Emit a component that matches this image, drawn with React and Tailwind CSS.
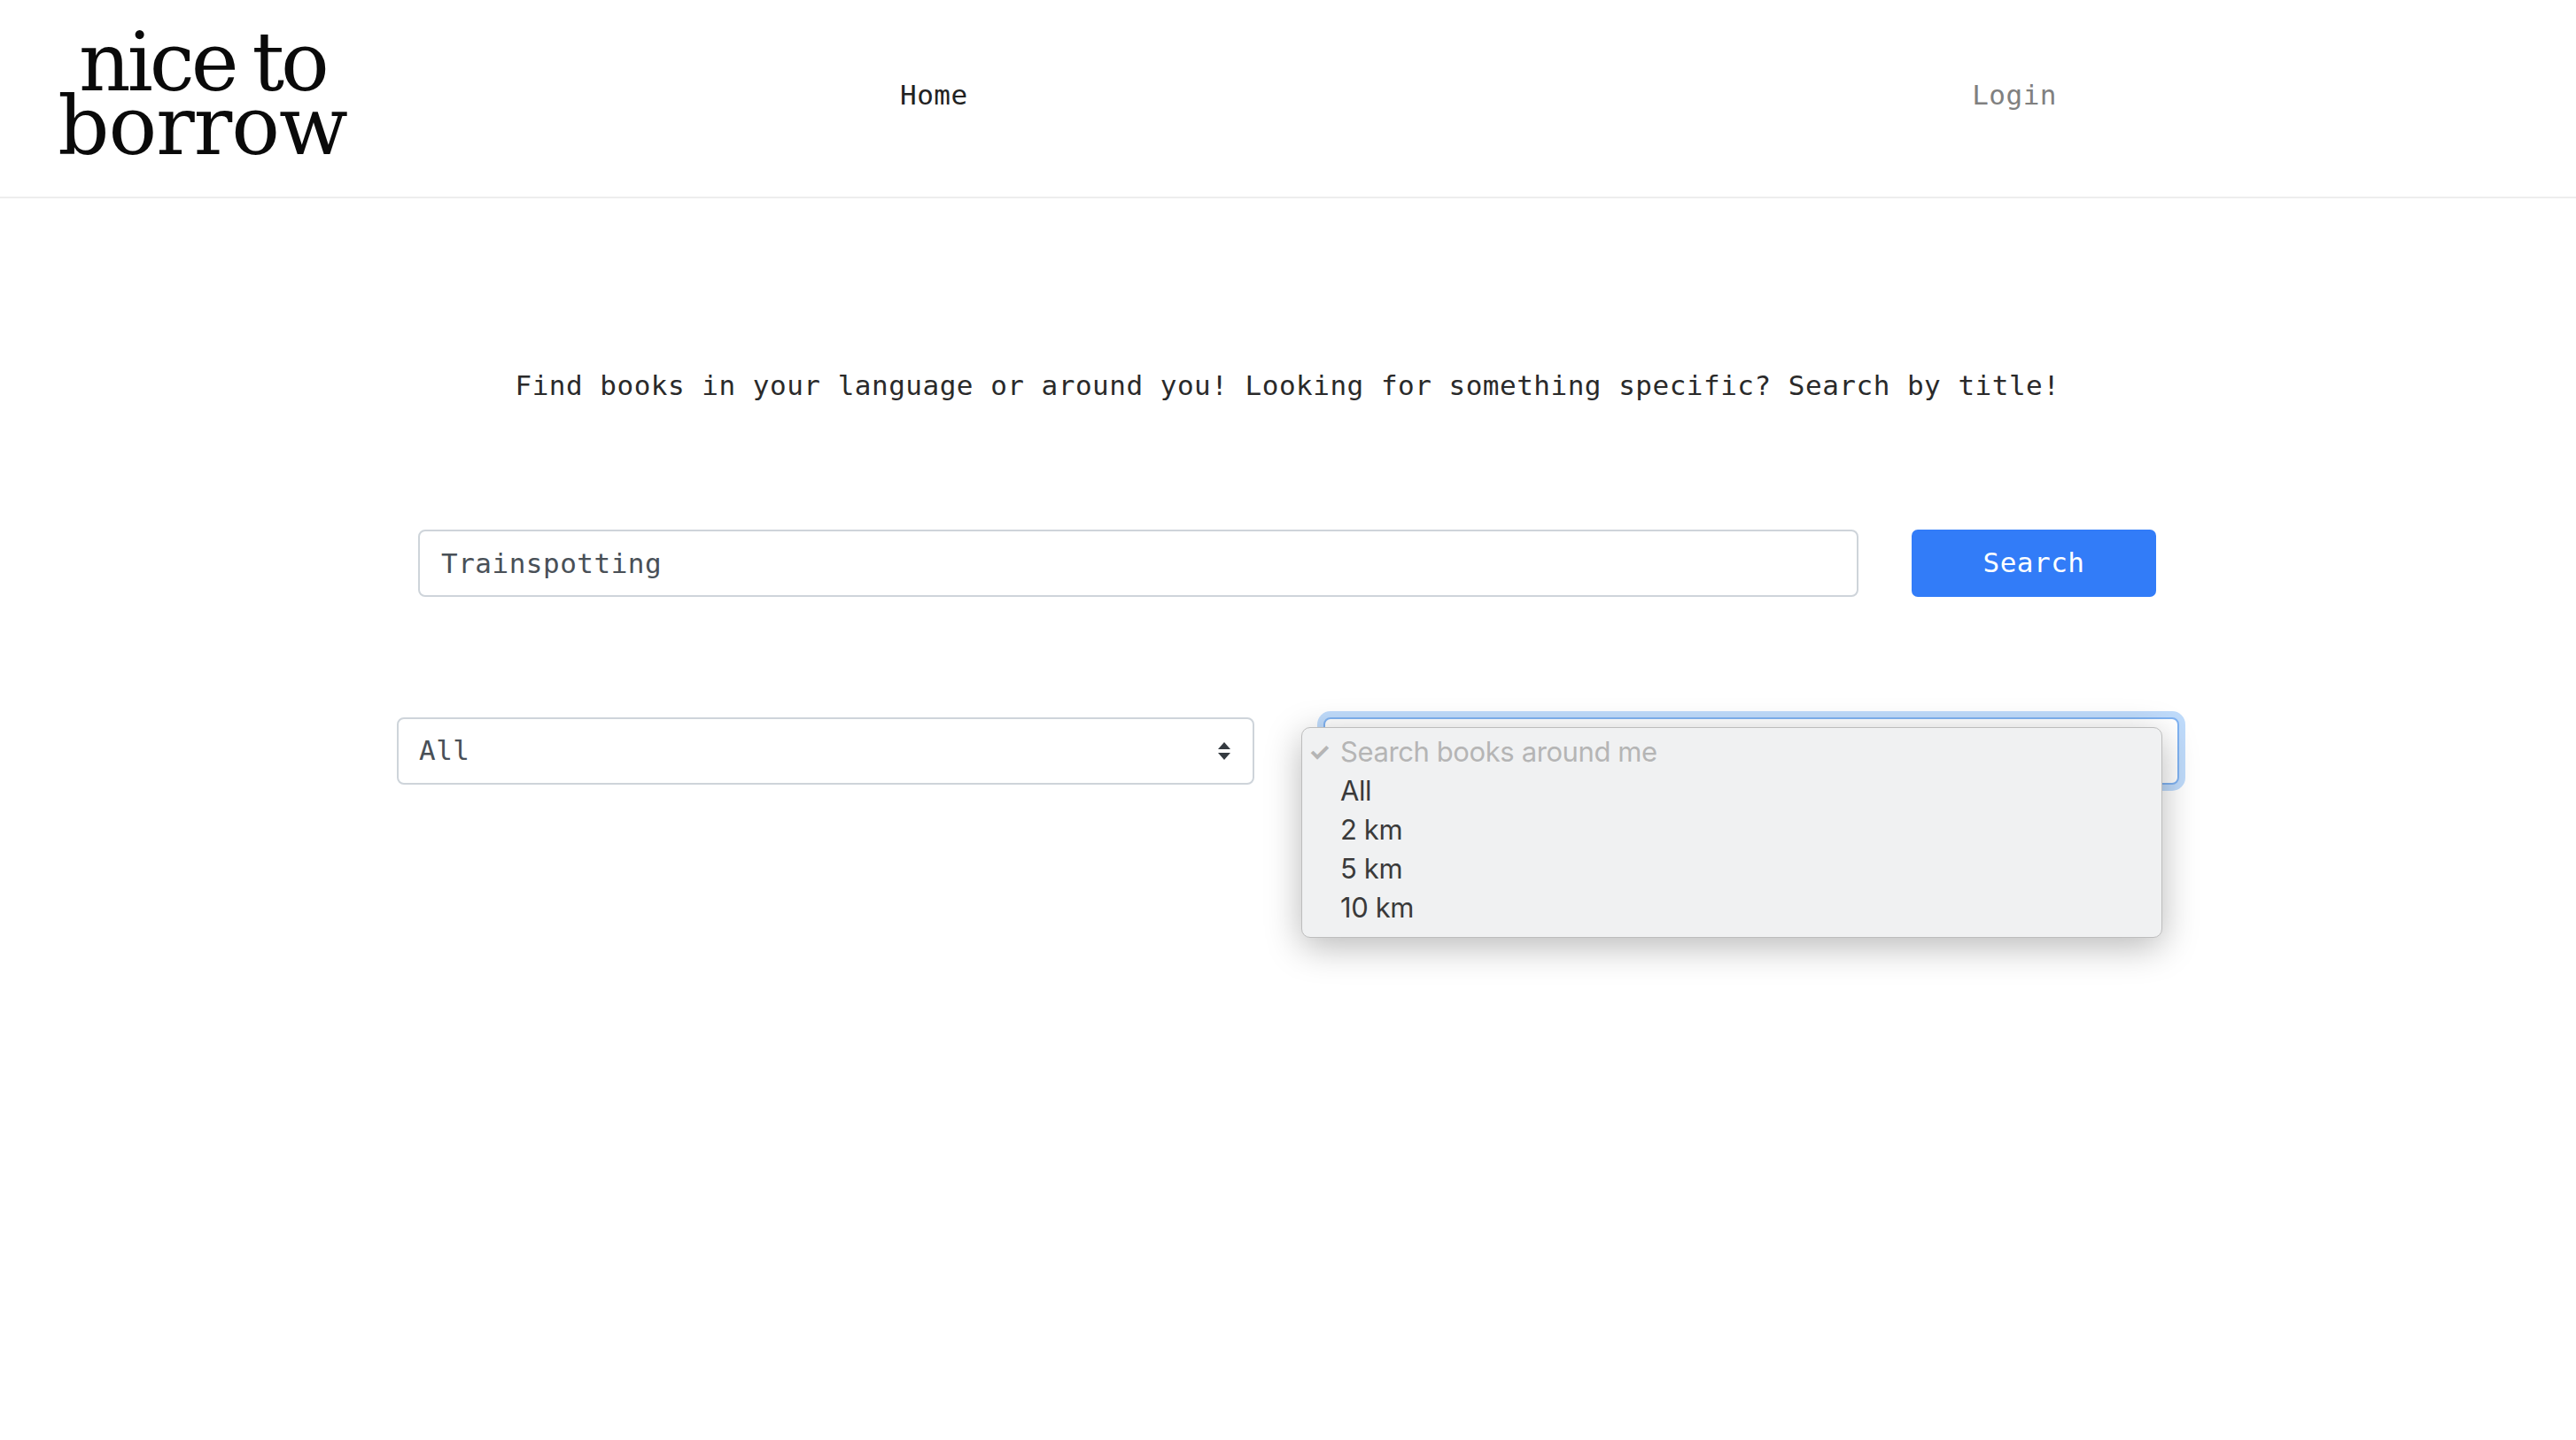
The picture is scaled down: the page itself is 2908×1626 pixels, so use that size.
export default function App() {
  const mono = "font-['DejaVu_Sans_Mono','Liberation_Mono',monospace] text-[31px] tracking-[0.5px]";
  const sf = "font-['Inter','Liberation_Sans',sans-serif] text-[31px] leading-[44px] tracking-[-0.4px]";
  return (
    <div className="min-h-[1626px] w-full bg-white">
      <header className="flex h-[224px] items-center border-b-2 border-[#ededed] pl-[62px] pr-[586px]">
        <div className="w-[333px] pb-[8px] text-center font-['DejaVu_Serif','Liberation_Serif',serif] text-[91px] leading-[72px] tracking-[-1px] text-[#0a0a0a]">
          <span className="tracking-[-4px] [word-spacing:-6px]">nice to</span><br />borrow
        </div>
        <a className={`ml-[621px] pb-[8px] text-[#222] ${mono}`}>Home</a>
        <a className={`ml-auto pb-[8px] text-[#808080] ${mono}`}>Login</a>
      </header>
      <main className="flex flex-col">
        <p className={`mt-[187px] pr-[1px] text-center leading-[48px] text-[#2a2a2a] ${mono}`}>
          Find books in your language or around you! Looking for something specific? Search by title!
        </p>
        <div className="mt-[139px] flex gap-[60px] pl-[472px]">
          <input
            readOnly
            value="Trainspotting"
            className={`h-[76px] w-[1626px] rounded-[8px] border-2 border-[#ced4da] bg-white px-[24px] text-[#495057] outline-none ${mono}`}
          />
          <button className={`h-[76px] w-[276px] rounded-[7px] bg-[#327cf8] pb-[2px] text-white ${mono}`}>Search</button>
        </div>
        <div className="mt-[136px] flex gap-[78px] pl-[448px]">
          <div className="relative w-[968px]">
            <select className={`h-[76px] w-full appearance-none rounded-[8px] border-2 border-[#ced4da] bg-white px-[23px] pb-[2px] text-[#495057] outline-none ${mono}`}>
              <option>All</option>
            </select>
            <svg className="absolute right-[26px] top-[28px]" width="16" height="20" viewBox="0 0 16 20">
              <path d="M8 0L15 8H1Z M1 12H15L8 20Z" fill="#343a40" />
            </svg>
          </div>
          <div className="relative h-[76px] w-[966px] rounded-[8px] border-2 border-[#80b3f2] bg-white shadow-[0_0_0_7px_#bfdbfb]">
            <div className={`absolute left-[-27px] top-[9px] z-10 h-[238px] w-[972px] rounded-[10px] border border-[#bdbdbd] bg-[#f0f1f2] py-[5px] pl-[43px] text-[#3a3a3a] shadow-[0_10px_40px_rgba(0,0,0,0.28)] ${sf}`}>
              <div className="relative text-[#b5b5b5]">
                <span className="absolute left-[-36px] top-0 text-[28px] font-bold">✓</span>
                Search books around me
              </div>
              <div>All</div>
              <div>2 km</div>
              <div>5 km</div>
              <div>10 km</div>
            </div>
          </div>
        </div>
      </main>
    </div>
  );
}
